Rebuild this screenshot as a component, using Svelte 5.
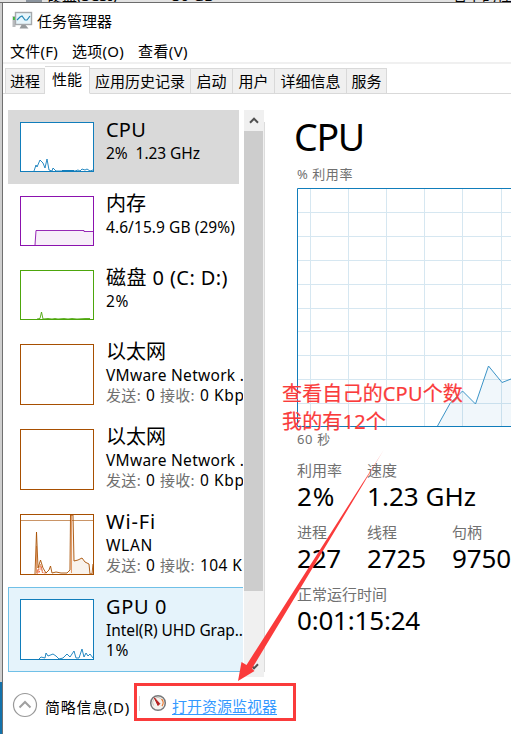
<script>
  // Spreads a text over a set width by adjusting its tracking.
  function fit(node, width) {
    if (!width) return;
    const natural = node.getBoundingClientRect().width;
    const count = [...node.textContent].length;
    node.style.letterSpacing = (width - natural) / count + 'px';
  }

  const menus = [['文件(F)', 48], ['选项(O)', 52], ['查看(V)', 50]];
  const tabs = [
    ['进程', 40], ['性能', 45, true], ['应用历史记录', 101], ['启动', 42],
    ['用户', 42], ['详细信息', 72], ['服务', 40]
  ];
  const items = [
    { name: 'CPU', w: 40, sub: '2%  1.23 GHz', sw: 94, color: '#117dbb', h: 50, kind: 'selected',
      line: '14,49 16,43 17,45 20,38 23,41 25,46 27,37 29,48 32,49 33,46 36,49 55,49 58,48 60,49 62,47 65,48 67,47 70,49 73,48' },
    { name: '内存', w: 40, sub: '4.6/15.9 GB (29%)', sw: 129, color: '#8b12ae', h: 50,
      line: '15,49 16,34.5 64,34.5 64,35.5 73,35.5', area: '15,49 16,34.5 64,34.5 64,35.5 73,35.5 73,49' },
    { name: '磁盘 0 (C: D:)', w: 122, sub: '2%', sw: 23, color: '#4da60c', h: 50,
      line: '17,49 20,48.5 21.5,42 23,49 28,48.5 32,49 35,48.5 38,49 44,48.5 48,49 52,48.5 57,49 65,48.5 70,48.5' },
    { name: '以太网', w: 60, sub: 'VMware Network ...', sw: 147, net: '0 Kbps', nw: 53, color: '#a74f01', h: 61 },
    { name: '以太网', w: 60, sub: 'VMware Network ...', sw: 147, net: '0 Kbps', nw: 53, color: '#a74f01', h: 61 },
    { name: 'Wi-Fi', w: 50, sub: 'WLAN', sw: 47, net: '104 Kbps', nw: 70, color: '#a74f01', h: 61,
      line: '15,60 16.5,18 18,54 20.5,46 23,54 26,59 29,56 30.5,52 32,59 36,58 41,59 47,59 50,56 50.5,1 53,1 54,47 58,46 62,44 65,48 69,50 70,60 72,60 73,50',
      area: '49,60 50.5,1 53,1 54,47 58,46 62,44 65,48 69,50 70,60' },
    { name: 'GPU 0', w: 61, sub: 'Intel(R) UHD Grap...', sw: 141, third: '1%', color: '#117dbb', h: 61, kind: 'hover',
      line: '19,60 21,58 25,59 26,54 28,57 33,55 36,57 39,60 43,59 47,55 50,58 54,52 56,59 59,59 62,50 64,58 66,54 68,57 70,55 73,59' }
  ];
  const stats = [
    [['利用率', '2%', 38], ['速度', '1.23 GHz', 109]],
    [['进程', '227', 44], ['线程', '2725', 59], ['句柄', '9750', 59]],
    [['正常运行时间', '0:01:15:24', 123]]
  ];
  const gridX = [13.5, 51.5, 89.5, 127.5, 165.5, 204.5];
  const gridY = [24.5, 48.5, 72.5, 96.5, 120.5, 143.5, 167.5, 191.5, 215.5];
</script>

<div class="screen">
  <div class="behind">
    <i class="disk"></i>
    <span class="b1">硬盘(SCSI)</span><span class="b2">30 GB</span><span class="b3">名下的性</span>
  </div>
  <div class="edge"><i></i></div>
  <main>
    <header>
      <svg width="22" height="20" viewBox="0 0 22 20">
        <rect x="0.5" y="5" width="3" height="11" fill="#b9bcbe" />
        <rect x="1" y="6" width="2" height="3" fill="#3fb837" />
        <rect x="3.5" y="1.5" width="16" height="12" fill="#e7f6fc" stroke="#a5a9ac" stroke-width="1.4" />
        <path d="M5 9 L8 6 L10 5 L13 9 L15 9 L18 5" fill="none" stroke="#2386b5" stroke-width="1.2" />
        <path d="M9.5 14h4l3 3.5h-9z" fill="#969a9c" />
      </svg>
      <span use:fit={75}>任务管理器</span>
    </header>
    <nav>
      {#each menus as [label, w]}<span use:fit={w}>{label}</span>{/each}
    </nav>
    <div class="tabs">
      {#each tabs as [label, w, on]}
        <div class="tab" class:on style:width="{w}px">{label}</div>
      {/each}
    </div>
    <section class="content">
      <div class="list">
        {#each items as it}
          <div class="item {it.kind ?? ''}">
            <svg width="74" height={it.h} viewBox="0 0 74 {it.h}">
              <rect x="0.5" y="0.5" width="73" height={it.h - 1} fill="#fff" />
              {#if it.area}<polygon points={it.area} fill={it.color} fill-opacity="0.07" />{/if}
              {#if it.name === 'Wi-Fi'}
                <path d="M1 6.5h72" stroke="#a74f01" stroke-opacity=".6" />
                <path d="M51.500 1v58M16.500 59V32M17 59l3.500-9 2 9" fill="none" stroke="#e59b68" stroke-width="1" />
                <path d="M17 60l1-5 1 4 2-7 2 7 4 0" fill="none" stroke="#ee6a4a" stroke-dasharray="1.5 1" />
              {/if}
              {#if it.name === 'CPU'}<path d="M42 48.500H54" stroke={it.color} />{/if}
              {#if it.line}<polyline points={it.line} fill="none" stroke={it.color} stroke-width=".9" />{/if}
              <rect x="0.5" y="0.5" width="73" height={it.h - 1} fill="none" stroke={it.color} />
            </svg>
            <div class="info">
              <div class="name"><span use:fit={it.w}>{it.name}</span></div>
              <div class="sub"><span use:fit={it.sw}>{it.sub}</span></div>
              {#if it.net}
                <div class="sub net">
                  <em use:fit={35}>发送:</em><span>0</span><em use:fit={35}>接收:</em><span use:fit={it.nw}>{it.net}</span>
                </div>
              {:else if it.third}
                <div class="sub"><span use:fit={23}>{it.third}</span></div>
              {/if}
            </div>
          </div>
        {/each}
      </div>
      <div class="scroll">
        <div class="btn"><svg width="10" height="7" viewBox="0 0 10 7"><path d="M1 5.7 5 1.7 9 5.7" /></svg></div>
        <div class="thumb"></div>
        <div class="btn down"><svg width="10" height="7" viewBox="0 0 10 7"><path d="M1 1.3 5 5.3 9 1.3" /></svg></div>
      </div>
      <div class="rule"></div>
      <div class="detail">
        <h1><span use:fit={70}>CPU</span></h1>
        <div class="cap"><span use:fit={56}>% 利用率</span></div>
        <svg class="chart" width="214" height="239" viewBox="0 0 214 239">
          {#each gridX as x}<path d="M{x} 0V238" stroke="#d6e7f1" />{/each}
          {#each gridY as y}<path d="M0 {y}H214" stroke="#d6e7f1" />{/each}
          <polygon points="140.5,238 153,215.5 165.5,203 178.5,216 191.5,178 205,194.5 214,191 214,238" fill="#117dbb" fill-opacity=".06" />
          <polyline points="140.5,238 153,215.5 165.5,203 178.5,216 191.5,178 205,194.5 214,191" fill="none" stroke="#3c94c7" />
          <path d="M214 .5H.5V238.5H214" fill="none" stroke="#117dbb" />
        </svg>
        <div class="cap axis"><span use:fit={34}>60 秒</span></div>
        <div class="stats">
          {#each stats as row}
            <div class="row">
              {#each row as [label, value, w]}
                <div class="stat"><div class="label">{label}</div><div class="value"><span use:fit={w}>{value}</span></div></div>
              {/each}
            </div>
          {/each}
        </div>
      </div>
    </section>
    <footer>
      <svg width="26" height="26" viewBox="0 0 26 26" fill="none">
        <circle cx="13" cy="13" r="11.5" stroke="#999" stroke-width="1.2" />
        <path d="M7.5 15.5 13 10 18.500 15.5" stroke="#a0a0a0" stroke-width="2" />
      </svg>
      <span class="brief" use:fit={85}>简略信息(D)</span>
      <i class="sep"></i>
      <svg class="gauge" width="18" height="18" viewBox="0 0 18 18">
        <circle cx="9" cy="9" r="7.3" fill="#f5f3ef" stroke="#77797b" stroke-width="1.5" />
        <path d="M4.500 11.500A5.200 5.200 0 0 1 5 5.200M6 4.300A5.200 5.200 0 0 1 12 4.500" fill="none" stroke="#ccc8bf" />
        <path d="M12.500 5A5.200 5.200 0 0 1 13 12" fill="none" stroke="#e9762c" stroke-width="1.3" />
        <path d="M5.300 3.800 10.800 9.700 9 11.500z" fill="#b51f1f" stroke="#b51f1f" />
      </svg>
      <a href="#monitor">打开资源监视器</a>
    </footer>
  </main>

  <div class="note"><div><span use:fit={181}>查看自己的CPU个数</span></div><div><span use:fit={104}>我的有12个</span></div></div>
  <svg class="arrow" width="511" height="734" viewBox="0 0 511 734">
    <defs>
      <linearGradient id="fade" gradientUnits="userSpaceOnUse" x1="384" y1="449" x2="362" y2="484">
        <stop offset="0" stop-color="#fa3b3b" stop-opacity=".3" /><stop offset="1" stop-color="#fa3b3b" />
      </linearGradient>
    </defs>
    <path d="M384 449.500 246.500 665 241.500 662 238 681 254.500 671 252 668.500z" fill="url(#fade)" />
  </svg>
  <div class="frame"></div>
</div>

<style>
  .screen { position: relative; width: 511px; height: 734px; overflow: hidden; background: #fff; color: #000;
    display: grid; grid-template: 3px 731px / 3px 508px;
    font: 15px/20px "Noto Sans", "Noto Sans CJK SC", sans-serif; }
  span, a, em { white-space: pre; }
  .behind { grid-column: 1 / 3; position: relative; height: 3px; overflow: hidden; background: #e2e2e2; border-bottom: 1px solid #6c6c6c; box-sizing: border-box; }
  .behind span { position: absolute; top: -15px; }
  .behind .b1 { left: 47px; } .behind .b2 { left: 172px; } .behind .b3 { left: 452px; }
  .disk { position: absolute; left: 26px; top: 0; width: 16px; height: 2px; background: #8b949e; }
  .edge { background: #cfcfcf; border-right: 1px solid #707070; display: flex; align-items: flex-end; }
  .edge i { width: 2px; height: 52px; background: #1272ab; }
  main { background: #fff; display: flex; flex-direction: column; min-width: 0; }
  header { height: 35px; padding: 0 0 0 9px; box-sizing: border-box; display: flex; align-items: center; gap: 3px; }
  nav { height: 24px; padding-left: 7px; display: flex; gap: 14px; border-bottom: 2px solid #f0f0f0; align-items: flex-end; }
  nav span { line-height: 22px; }
  .tabs { height: 30px; display: flex; align-items: flex-end; padding-left: 2px; box-shadow: inset 0 -1px #d9d9d9; }
  .tab { box-sizing: border-box; height: 26px; line-height: 25px; background: #f0f0f0; border: 1px solid #d9d9d9; border-left-width: 0; text-align: center; white-space: nowrap; }
  .tab:first-child { border-left-width: 1px; }
  .tab.on { height: 28px; background: #fff; border-bottom-color: #fff; line-height: 24px; }
  .content { display: flex; height: 584px; padding: 16px 0 0 5px; box-sizing: border-box; }
  .list { width: 235px; height: 562px; overflow: hidden; flex: none; }
  .item { width: 231px; display: flex; padding: 12px 0 12px 12px; box-sizing: border-box; }
  .item > svg { flex: none; display: block; }
  .info { margin: -6px 0 -12px 12px; white-space: nowrap; }
  .item.selected { background: #d9d9d9; }
  .item.hover { width: 235px; background: #e5f3fb; box-shadow: inset 1px 1px #70c0e7, inset 0 -1px #70c0e7; }
  .name { font-size: 20px; line-height: 28px; }
  .sub { height: 20px; line-height: 18px; font-size: 15.500px; }
  .net { display: flex; }
  .net em { color: #707070; font-style: normal; font-size: 15px; margin-right: 5px; }
  .net em:nth-child(3) { margin-left: 5px; }
  .scroll { width: 20px; height: 567px; margin-left: 1px; background: #f0f0f0; flex: none; display: flex; flex-direction: column; }
  .btn { height: 21px; display: flex; align-items: center; justify-content: center; }
  .btn path { fill: none; stroke: #505050; stroke-width: 2; }
  .thumb { width: 19px; height: 460px; background: #cdcdcd; }
  .down { margin-top: auto; }
  .rule { width: 1px; height: 550px; margin-top: 12px; background: #dcdcdc; flex: none; }
  .detail { margin-left: 32px; width: 214px; overflow: visible; flex: none; }
  h1 { margin: 0 0 0 -3px; font-size: 37.500px; font-weight: 400; line-height: 54px; }
  .cap { font-size: 13px; line-height: 20px; color: #707070; margin-bottom: 4px; }
  .cap.axis { margin: 2px 0 0; }
  .chart { display: block; margin-top: 3px; }
  .stats { margin-top: 10px; }
  .row { display: flex; height: 62px; }
  .stat { width: 70px; flex: none; white-space: nowrap; }
  .stat:nth-child(2) { width: 85px; }
  .label { color: #707070; line-height: 22px; }
  .value { font-size: 26px; line-height: 30px; }
  footer { display: flex; align-items: center; height: 54px; padding-left: 9px; }
  .brief { margin: 3px 0 0 7px; }
  .sep { width: 1px; height: 15px; margin: -4px 9px 0 9px; background: #d5d5d5; }
  .gauge { margin-top: -4px; }
  a { color: #3399ff; margin: 1px 0 0 5px; text-decoration: underline; text-underline-offset: 2px; }
  .note { position: absolute; left: 282px; top: 380px; font-size: 20px; line-height: 28px; color: #fa3b3b; -webkit-text-stroke: .2px #fa3b3b; }
  .arrow { position: absolute; left: 0; top: 0; }
  .frame { position: absolute; left: 134px; top: 683px; width: 162px; height: 38px; box-sizing: border-box; border: 3px solid #fa3b3b; }
</style>
